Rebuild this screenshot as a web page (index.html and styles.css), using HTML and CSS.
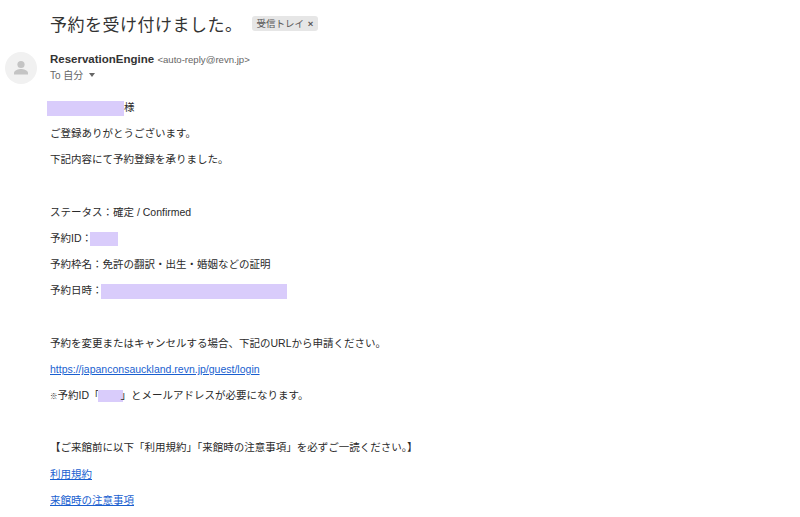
FILE: index.html
```html
<!DOCTYPE html>
<html lang="ja">
<head>
    <meta charset="UTF-8">
    <meta name="viewport" content="width=device-width, initial-scale=1.0">
    <title>予約を受け付けました。</title>
    <link rel="stylesheet" href="styles.css">
</head>
<body>

    <div class="subject">
        <h1>予約を受け付けました。</h1>
        <span class="label">受信トレイ <span class="label-x">×</span></span>
    </div>

    <div class="sender">
        <div class="avatar">
            <svg width="20" height="20" viewBox="0 0 20 20">
                <circle cx="10" cy="6.5" r="3.6" fill="#c4c4c4"/>
                <path d="M3 16.5v-1.6c0-2.5 4.7-3.8 7-3.8s7 1.3 7 3.8v1.6z" fill="#c4c4c4"/>
            </svg>
        </div>
        <div class="sender-info">
            <div class="sender-line"><b>ReservationEngine</b> <span class="address">&lt;auto-reply@revn.jp&gt;</span></div>
            <div class="to-line">To 自分 <span class="caret"></span></div>
        </div>
    </div>

    <div class="mail-body">
        <p class="name-line"><span class="mask mask-name"></span>様</p>
        <p>ご登録ありがとうございます。</p>
        <p>下記内容にて予約登録を承りました。</p>
        <p>&nbsp;</p>
        <p>ステータス：確定 / Confirmed</p>
        <p>予約ID：<span class="mask mask-id"></span></p>
        <p>予約枠名：免許の翻訳・出生・婚姻などの証明</p>
        <p>予約日時：<span class="mask mask-date"></span></p>
        <p>&nbsp;</p>
        <p>予約を変更またはキャンセルする場合、下記のURLから申請ください。</p>
        <p><a href="#">https://japanconsauckland.revn.jp/guest/login</a></p>
        <p><span class="note-mark">※</span>予約ID「<span class="mask mask-id2"></span>」とメールアドレスが必要になります。</p>
        <p>&nbsp;</p>
        <p>【ご来館前に以下「利用規約」「来館時の注意事項」を必ずご一読ください。】</p>
        <p><a href="#">利用規約</a></p>
        <p><a href="#">来館時の注意事項</a></p>
    </div>

</body>
</html>
```

FILE: styles.css
```css
body {
    margin: 0;
    height: 517px;
    overflow: hidden;
    background-color: #fff;
    color: #222;
    font-family: "Liberation Sans", "Noto Sans CJK JP", sans-serif;
}

.subject {
    display: flex;
    align-items: center;
    gap: 9px;
    padding: 10px 0 0 50px;
    height: 26px;
}

h1 {
    margin: 0;
    font-size: 17px;
    font-weight: 400;
    color: #333;
    letter-spacing: 0.5px;
}

.label {
    padding: 1px 5px;
    font-size: 9.5px;
    line-height: 13px;
    color: #555;
    background-color: #e6e6e6;
    border-radius: 3px;
}

.label-x {
    margin-left: 1px;
    font-weight: 700;
}

.sender {
    display: flex;
    gap: 13px;
    margin-top: 16px;
    padding-left: 5px;
}

.avatar {
    display: flex;
    align-items: center;
    justify-content: center;
    width: 32px;
    height: 32px;
    border-radius: 50%;
    background-color: #f1f1f1;
}

.sender-line {
    font-size: 11.5px;
    line-height: 15px;
}

.sender-line b {
    color: #333;
}

.address {
    font-size: 9.6px;
    color: #666;
}

.to-line {
    margin-top: 2px;
    font-size: 10px;
    line-height: 14px;
    color: #666;
}

.caret {
    display: inline-block;
    margin-left: 3px;
    vertical-align: 2px;
    border-left: 3.5px solid transparent;
    border-right: 3.5px solid transparent;
    border-top: 4px solid #666;
}

.mail-body {
    margin-top: 10px;
    padding-left: 50px;
    font-size: 10.5px;
    color: #2a2a2a;
}

.mail-body p {
    margin: 0;
    height: 26.2px;
    line-height: 26.2px;
    white-space: nowrap;
}

.mail-body a {
    color: #1a5fd0;
}

.note-mark {
    font-size: 7.5px;
}

.mask {
    display: inline-block;
    vertical-align: middle;
    height: 15px;
    background-color: #d9ccfb;
}

.mask-name {
    width: 77px;
    margin-left: -3px;
}

.mask-id {
    width: 28px;
    height: 14px;
    margin-left: -2px;
}

.mask-date {
    width: 186px;
    margin-left: -2px;
}

.mask-id2 {
    width: 25px;
    height: 12px;
    margin: 0 -2px;
}
```
